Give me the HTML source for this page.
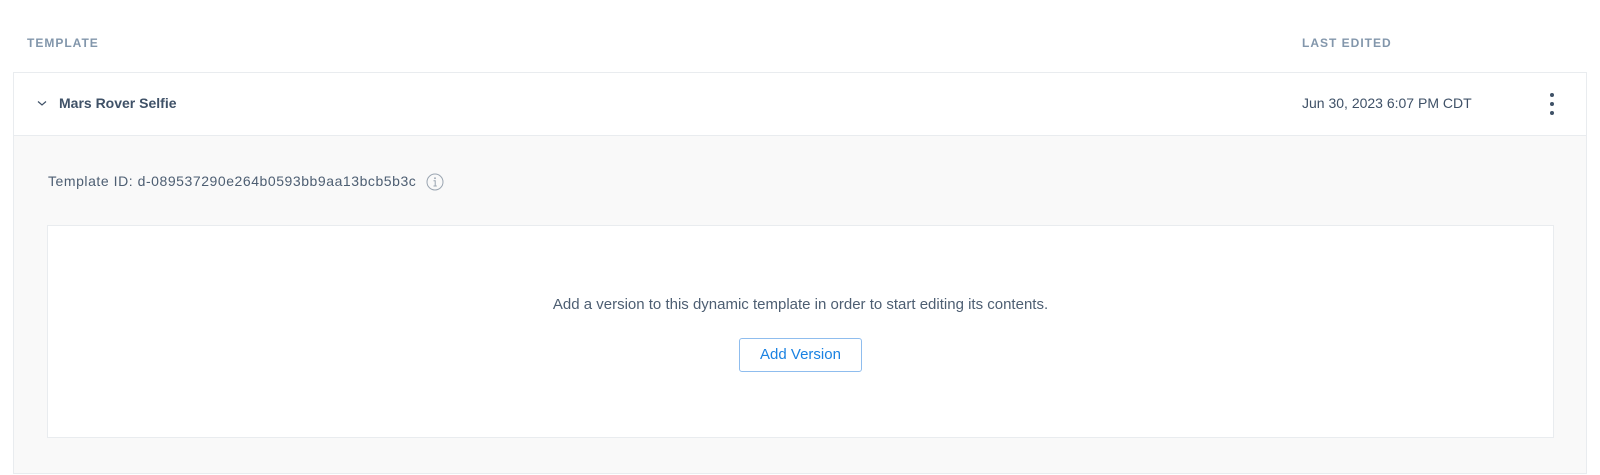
<!DOCTYPE html>
<html><head><style>
*{box-sizing:border-box;margin:0;padding:0}
body{width:1600px;height:475px;background:#fff;font-family:"Liberation Sans",sans-serif;position:relative;overflow:hidden;color:#3f5167}
.abs{position:absolute;white-space:nowrap}
.h{font-size:12px;font-weight:bold;letter-spacing:1px;color:#8296ab;top:36px}
.card{position:absolute;left:13px;top:72px;width:1574px;height:402px;border:1px solid #e9ecef;background:#f9f9f9}
.row{position:absolute;left:0;top:0;right:0;height:63px;background:#fff;border-bottom:1px solid #e9ecef}
.inner{position:absolute;left:33px;top:152px;width:1507px;height:213px;background:#fff;border:1px solid #e9ecef}
.btn{position:absolute;left:691px;top:112px;width:123px;height:34px;border:1px solid #8fbdee;border-radius:3px;color:#1a82e2;font-size:15px;text-align:center;line-height:32px;background:#fff}
.dot{position:absolute;width:4px;height:4px;border-radius:50%;background:#3f5167}
</style></head><body>
<div class="abs h" style="left:27px">TEMPLATE</div>
<div class="abs h" style="left:1302px">LAST EDITED</div>
<div class="card">
 <div class="row">
  <svg class="abs" style="left:23px;top:27px" width="10" height="7" viewBox="0 0 10 7"><path d="M1 1.5 L5 5 L9 1.5" fill="none" stroke="#3f5167" stroke-width="1.2"/></svg>
  <div class="abs" style="left:45px;top:22px;font-size:14px;font-weight:bold;color:#3f5167">Mars Rover Selfie</div>
  <div class="abs" style="left:1288px;top:22px;font-size:14px;color:#3f5167">Jun 30, 2023 6:07 PM CDT</div>
  <div class="dot" style="left:1536px;top:20px"></div>
  <div class="dot" style="left:1536px;top:29px"></div>
  <div class="dot" style="left:1536px;top:38px"></div>
 </div>
 <div class="abs" style="left:34px;top:100px;font-size:14px;color:#4d5e72;letter-spacing:0.55px">Template ID: d-089537290e264b0593bb9aa13bcb5b3c</div>
 <svg class="abs" style="left:412px;top:100px" width="18" height="18" viewBox="0 0 18 18"><circle cx="9" cy="9" r="8" fill="none" stroke="#9aa5b1" stroke-width="1"/><circle cx="9" cy="5.2" r="0.9" fill="#9aa5b1"/><path d="M7.5 7.8 H9.2 V13 M7.5 13 H10.8" fill="none" stroke="#9aa5b1" stroke-width="1"/></svg>
 <div class="inner">
  <div class="abs" style="left:0;right:0;top:70px;text-align:center;font-size:15px;color:#4d5e72">Add a version to this dynamic template in order to start editing its contents.</div>
  <div class="btn">Add Version</div>
 </div>
</div>
</body></html>
